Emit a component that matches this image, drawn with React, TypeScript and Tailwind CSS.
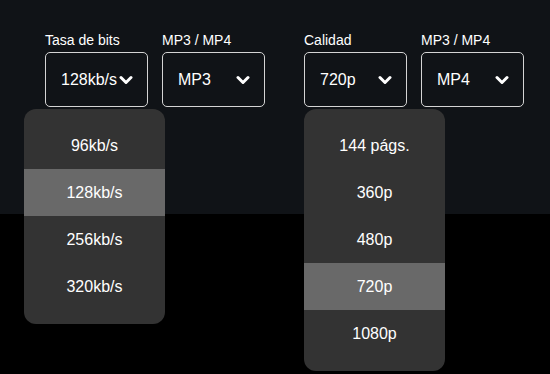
import React from 'react';

const Chevron = () => (
  <svg width="14" height="10" viewBox="0 0 14 10" fill="none" className="shrink-0">
    <path d="M2 2.5 L7 7.5 L12 2.5" stroke="white" strokeWidth="3" strokeLinecap="round" strokeLinejoin="round" />
  </svg>
);

const SelectBox = ({ label, value }: { label: string; value: string }) => (
  <div className="flex flex-col w-[103px]">
    <span className="text-[14px] leading-[17px] text-white mb-[3px] whitespace-nowrap">{label}</span>
    <div className="h-[55px] border-[1.5px] border-[#d4d4d4] rounded-[5px] flex items-center justify-between pl-[15px] pr-[14px]">
      <span className="text-[16px] text-white whitespace-nowrap">{value}</span>
      <Chevron />
    </div>
  </div>
);

const Menu = ({ items, active, className }: { items: string[]; active: string; className: string }) => (
  <div className={`absolute w-[141px] bg-[#333333] rounded-[12px] pt-[13px] pb-[14px] ${className}`}>
    {items.map((item) => (
      <div
        key={item}
        className={`h-[47px] flex items-center justify-center text-[16px] text-white ${item === active ? 'bg-[#696969]' : ''}`}
      >
        {item}
      </div>
    ))}
  </div>
);

export default function App() {
  return (
    <div className="relative w-full h-[374px] bg-black overflow-hidden" style={{ fontFamily: '"Liberation Sans", Arial, sans-serif' }}>
      <div className="h-[214px] bg-[#101317] pt-[32px] pl-[45px] flex gap-[39px]">
        <div className="flex gap-[14px]">
          <SelectBox label="Tasa de bits" value="128kb/s" />
          <SelectBox label="MP3 / MP4" value="MP3" />
        </div>
        <div className="flex gap-[14px]">
          <SelectBox label="Calidad" value="720p" />
          <SelectBox label="MP3 / MP4" value="MP4" />
        </div>
      </div>
      <Menu className="left-[24px] top-[109px]" items={['96kb/s', '128kb/s', '256kb/s', '320kb/s']} active="128kb/s" />
      <Menu className="left-[304px] top-[109px]" items={['144 págs.', '360p', '480p', '720p', '1080p']} active="720p" />
    </div>
  );
}
